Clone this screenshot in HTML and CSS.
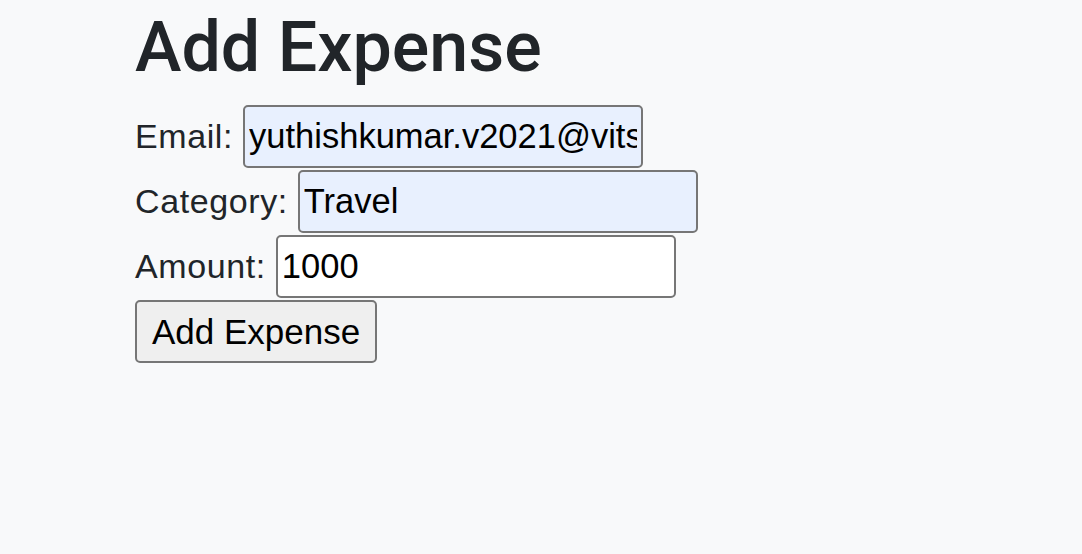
FILE: index.html
```html
<!DOCTYPE html>
<html lang="en">
<head>
<meta charset="utf-8">
<title>Add Expense</title>
<link rel="stylesheet" href="styles.css">
</head>
<body>
<main class="page">
  <h1 class="title">Add Expense</h1>
  <form class="form">
    <div class="row">
      <label class="label" for="email">Email:</label>
      <input class="field autofill" id="email" type="text" value="yuthishkumar.v2021@vitstudent.ac.in">
    </div>
    <div class="row">
      <label class="label" for="category">Category:</label>
      <input class="field autofill" id="category" type="text" value="Travel">
    </div>
    <div class="row">
      <label class="label" for="amount">Amount:</label>
      <input class="field" id="amount" type="text" value="1000">
    </div>
    <div class="row">
      <button class="btn" type="button">Add Expense</button>
    </div>
  </form>
</main>
</body>
</html>
```

FILE: styles.css
```css
html, body {
  margin: 0;
  padding: 0;
  background: #f8f9fa;
}
body {
  font-family: "Liberation Sans", Arial, sans-serif;
  color: #212529;
}
.page {
  padding-left: 135px;
}
.title {
  margin: 5px 0 16px 0;
  font-family: Roboto, "Liberation Sans", Arial, sans-serif;
  font-size: 70px;
  line-height: 1.2;
  font-weight: 500;
  color: #212529;
}
.form {
  display: flex;
  flex-direction: column;
  gap: 2px;
}
.row {
  display: flex;
  align-items: center;
  gap: 10px;
  height: 63px;
}
.label {
  font-size: 34px;
  letter-spacing: 0.6px;
  color: #212529;
}
.field {
  box-sizing: border-box;
  width: 400px;
  height: 63px;
  margin: 0;
  padding: 0 4px;
  border: 2px solid #767676;
  border-radius: 5px;
  font-family: "Liberation Sans", Arial, sans-serif;
  font-size: 34.5px;
  color: #000;
  background: #fff;
  outline: none;
}
.autofill {
  background: #e8f0fe;
}
.btn {
  box-sizing: border-box;
  height: 63px;
  margin: 0;
  padding: 0 15px;
  border: 2px solid #767676;
  border-radius: 5px;
  background: #efefef;
  font-family: "Liberation Sans", Arial, sans-serif;
  font-size: 35px;
  color: #000;
}
```
